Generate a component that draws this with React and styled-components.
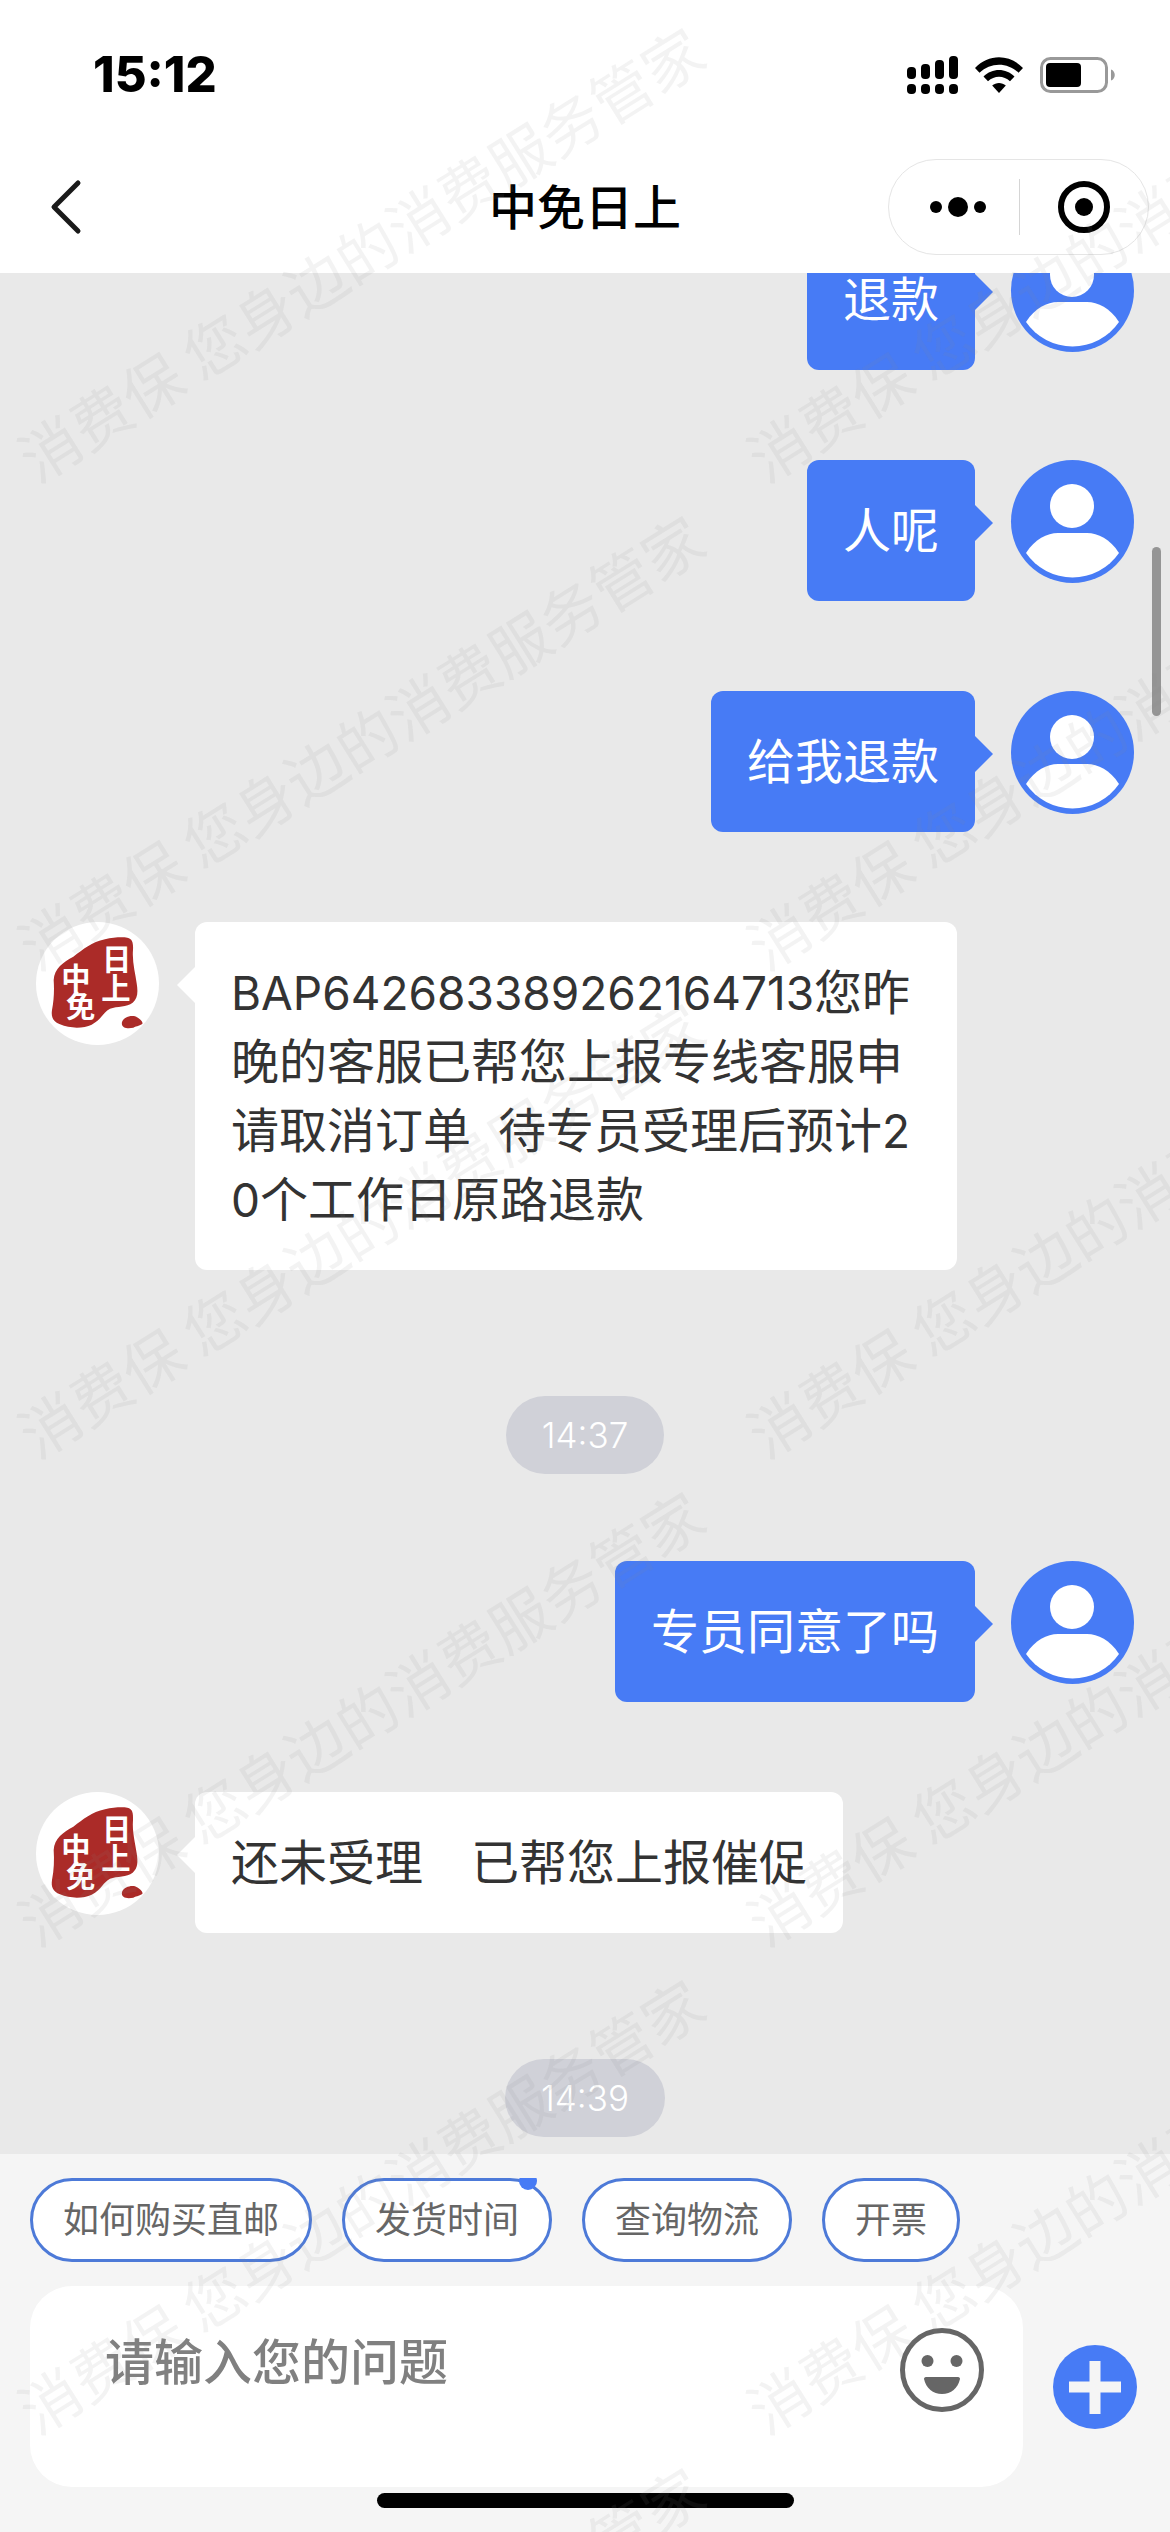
import React from 'react';
import styled, { createGlobalStyle } from 'styled-components';

const GlobalStyle = createGlobalStyle`
  * {
    box-sizing: border-box;
  }

  body {
    margin: 0;
    font-family: Inter, 'Noto Sans CJK SC', sans-serif;
  }

  button {
    margin: 0;
    padding: 0;
    border: none;
    background: none;
    font-family: inherit;
    cursor: pointer;
  }

  svg {
    display: block;
  }
`;

const PageStyle = styled.div`
  height: 100vh;
  background-color: #e9e9e9;
  overflow: hidden;

  display: flex;
  flex-direction: column;

  position: relative;
`;

const HeaderStyle = styled.header`
  background-color: #fff;
  flex: none;
`;

const StatusBar = styled.div`
  height: 141px;
  padding: 8px 55px 0 93px;

  display: flex;
  justify-content: space-between;
  align-items: center;

  time {
    font-size: 49px;
    font-weight: 800;
    color: #000;
  }
`;

const StatusIcons = styled.div`
  display: flex;
  align-items: center;
  gap: 17px;
`;

const NavBar = styled.nav`
  height: 132px;
  padding: 0 21px;

  display: grid;
  grid-template-columns: 1fr auto 1fr;
  align-items: center;

  h1 {
    margin: 0;
    font-size: 48px;
    font-weight: 500;
    line-height: 69px;
    color: #000;
  }
`;

const BackButton = styled.button`
  width: 60px;
  height: 60px;
  margin-left: 15px;
`;

const Capsule = styled.div`
  width: 261px;
  height: 96px;
  border: 1px solid #e5e5e5;
  border-radius: 48px;
  justify-self: end;

  display: flex;
  align-items: center;
`;

const CapsuleButton = styled.button`
  width: 50%;
  height: 56px;

  display: flex;
  justify-content: center;
  align-items: center;

  &:first-child {
    padding-left: 8px;
  }

  & + & {
    border-left: 1px solid #d5d5d5;
  }
`;

const ChatStyle = styled.main`
  flex: 1;
  min-height: 0;
  padding: 0 36px 17px;
  overflow: hidden;

  display: flex;
  flex-direction: column;
  justify-content: flex-end;

  position: relative;
`;

const ScrollThumb = styled.div`
  width: 9px;
  height: 169px;
  border-radius: 5px;
  background-color: #959595;

  position: absolute;
  top: 274px;
  right: 9px;
`;

const MessageRow = styled.div`
  flex: none;
  margin-bottom: 90px;

  display: flex;
  flex-direction: ${({ $mine }) => ($mine ? 'row-reverse' : 'row')};
  align-items: flex-start;
  gap: 36px;
`;

const Avatar = styled.div`
  width: 123px;
  height: 123px;
  border-radius: 50%;
  background-color: ${({ $mine }) => ($mine ? '#477bf5' : '#fff')};
  overflow: hidden;
  flex: none;
`;

const Bubble = styled.p`
  max-width: calc(100% - 336px);
  margin: 0;
  padding: 36px;
  border-radius: 12px;
  background-color: ${({ $mine }) => ($mine ? '#477bf5' : '#fff')};
  color: ${({ $mine }) => ($mine ? '#fff' : '#333')};
  font-size: 48px;
  line-height: 69px;
  white-space: pre-wrap;
  word-break: break-all;

  position: relative;

  &::after {
    content: "";
    border: 18px solid transparent;
    ${({ $mine }) => ($mine ? 'border-left-color: #477bf5; border-right: 0;' : 'border-right-color: #fff; border-left: 0;')}

    position: absolute;
    top: 45px;
    ${({ $mine }) => ($mine ? 'right: -18px;' : 'left: -18px;')}
  }
`;

const Latin = styled.span`
  font-size: 46px;
  line-height: 1;
`;

const TimeStamp = styled.time`
  flex: none;
  align-self: center;
  height: 78px;
  margin: 36px 0 87px;
  padding: 0 36px;
  border-radius: 39px;
  background-color: #d0d1d8;
  color: #fff;
  font-size: 35px;
  font-weight: 300;
  line-height: 78px;

  &:last-child {
    margin-bottom: 0;
  }
`;

const FooterStyle = styled.footer`
  flex: none;
  padding: 24px 30px;
  background-color: #f5f5f5;
`;

const QuickList = styled.div`
  display: flex;
  gap: 30px;
  overflow: hidden;
`;

const QuickButton = styled.button`
  height: 84px;
  padding: 0 30px;
  border: 3px solid #4d7ad8;
  border-radius: 42px;
  background-color: #fff;
  color: #666;
  font-size: 36px;
  line-height: 76px;
  white-space: nowrap;
  flex: none;

  position: relative;
`;

const Badge = styled.span`
  width: 18px;
  height: 18px;
  border-radius: 50%;
  background-color: #477bf5;

  position: absolute;
  top: -9px;
  right: 12px;
`;

const Composer = styled.div`
  margin-top: 24px;
  padding-right: 3px;

  display: flex;
  align-items: center;
  gap: 30px;
`;

const InputBox = styled.div`
  flex: 1;
  min-width: 0;
  height: 201px;
  padding: 42px 39px 0 75px;
  border-radius: 42px;
  background-color: #fff;

  display: flex;
  align-items: flex-start;
`;

const TextInput = styled.textarea`
  flex: 1;
  min-width: 0;
  height: 138px;
  padding: 0;
  border: none;
  outline: none;
  resize: none;
  background: none;
  color: #333;
  font-family: inherit;
  font-size: 49px;
  font-weight: 500;
  line-height: 69px;

  &::placeholder {
    color: #808080;
    opacity: 1;
  }
`;

const RoundButton = styled.button`
  width: 84px;
  height: 84px;
  border-radius: 50%;
  flex: none;
`;

const HomeBar = styled.div`
  width: 417px;
  max-width: 100%;
  height: 15px;
  margin: 6px auto 0;
  border-radius: 8px;
  background-color: #000;
`;

const WatermarkLayer = styled.div`
  overflow: hidden;
  pointer-events: none;

  display: grid;
  grid-template-columns: repeat(2, 729px);
  grid-auto-rows: 488px;
  place-items: center;

  position: absolute;
  top: 8px;
  right: 0;
  bottom: 0;
  left: -5px;
`;

const Watermark = styled.span`
  color: rgba(140, 140, 140, 0.1);
  font-family: 'Noto Sans CJK SC', sans-serif;
  font-size: 60px;
  line-height: 60px;
  white-space: nowrap;
  transform: rotate(-32deg);
`;

const messages = [
  { mine: true, text: '退款' },
  { mine: true, text: '人呢' },
  { mine: true, text: '给我退款' },
  { text: 'BAP642683389262164713您昨晚的客服已帮您上报专线客服申请取消订单  待专员受理后预计20个工作日原路退款' },
  { time: '14:37' },
  { mine: true, text: '专员同意了吗' },
  { text: '还未受理　已帮您上报催促' },
  { time: '14:39' },
];

const quickReplies = [
  { label: '如何购买直邮' },
  { label: '发货时间', badge: true },
  { label: '查询物流' },
  { label: '开票' },
];

function SignalIcon() {
  return (
    <svg width="51" height="38" viewBox="0 0 51 38">
      <rect x="0" y="11" width="9" height="12" rx="4" />
      <rect x="14" y="8" width="9" height="15" rx="4" />
      <rect x="28" y="4" width="9" height="19" rx="4" />
      <rect x="42" y="0" width="9" height="23" rx="4" />
      <rect x="0" y="28" width="9" height="10" rx="4" />
      <rect x="14" y="28" width="9" height="10" rx="4" />
      <rect x="28" y="28" width="9" height="10" rx="4" />
      <rect x="42" y="28" width="9" height="10" rx="4" />
    </svg>
  );
}

function WifiIcon() {
  return (
    <svg width="48" height="36" viewBox="0 0 48 36">
      <path d="M0 11C13.5-3.5 34.5-3.5 48 11L43.5 15.7C32.500 5 15.500 5 4.500 15.700Z" />
      <path d="M8.500 19.500C17 10.700 31 10.700 39.500 19.500L35 24.300C28.800 18.200 19.200 18.200 13 24.300Z" />
      <path d="M17.200 28.500C21 25 27 25 30.800 28.500L24 36Z" />
    </svg>
  );
}

function BatteryIcon() {
  return (
    <svg width="75" height="36" viewBox="0 0 75 36">
      <rect x="1.500" y="1.500" width="65" height="33" rx="9" fill="none" stroke="#999" strokeWidth="3" />
      <rect x="6" y="6" width="35" height="24" rx="4" />
      <path d="M71 12.500C76 14 76 22 71 23.500Z" fill="#999" />
    </svg>
  );
}

function UserFace() {
  return (
    <svg width="123" height="123" viewBox="0 0 123 123" fill="#fff">
      <circle cx="61" cy="46" r="22" />
      <path d="M15 93C24 79 36 73 47 73H76C87 73 99 79 108 93A56.500 56.500 0 0 1 15 93Z" />
    </svg>
  );
}

const SealText = styled.text`
  font-family: 'Noto Sans CJK SC', sans-serif;
  font-size: ${({ $size }) => $size}px;
  font-weight: 700;
  fill: #fff;
  text-anchor: middle;
`;

function ShopSeal() {
  return (
    <svg width="123" height="123" viewBox="48 66 369 369">
      <path
        fill="#ab2b28"
        d="M101 240C103 205 130 186 160 170C190 148 215 126 255 118C280 112 305 111 322 113C338 116 340 130 339 150C336 185 346 220 350 250C354 275 354 295 338 308C320 322 292 318 270 326C250 336 245 358 215 374C190 386 150 386 120 373C98 364 93 350 96 330C102 300 103 270 101 240Z"
      />
      <path fill="#ab2b28" d="M306 366C312 352 330 346 345 349C358 354 366 362 368 370C362 378 350 378 340 383C325 386 302 386 306 366Z" />
      <SealText x="290" y="209" $size={88}>日</SealText>
      <SealText x="288" y="298" $size={88}>上</SealText>
      <SealText x="168" y="266" $size={88}>中</SealText>
      <SealText x="182" y="352" $size={88}>免</SealText>
    </svg>
  );
}

function MessageText({ text }) {
  return text.split(/([A-Z0-9]+)/).map((part, i) => (
    i % 2 ? <Latin key={i}>{part}</Latin> : part
  ));
}

function Message({ mine, text }) {
  return (
    <MessageRow $mine={mine}>
      <Avatar $mine={mine}>{mine ? <UserFace /> : <ShopSeal />}</Avatar>
      <Bubble $mine={mine}><MessageText text={text} /></Bubble>
    </MessageRow>
  );
}

function Header() {
  return (
    <HeaderStyle>
      <StatusBar>
        <time>15:12</time>
        <StatusIcons>
          <SignalIcon />
          <WifiIcon />
          <BatteryIcon />
        </StatusIcons>
      </StatusBar>

      <NavBar>
        <BackButton aria-label="返回">
          <svg width="60" height="60" viewBox="0 0 60 60" fill="none" stroke="#1a1a1a" strokeWidth="5" strokeLinecap="round" strokeLinejoin="round">
            <path d="M42 6L18 30L42 54" />
          </svg>
        </BackButton>
        <h1>中免日上</h1>
        <Capsule>
          <CapsuleButton aria-label="更多">
            <svg width="58" height="20" viewBox="0 0 58 20">
              <circle cx="7" cy="10" r="6" />
              <circle cx="29" cy="10" r="10" />
              <circle cx="51" cy="10" r="6" />
            </svg>
          </CapsuleButton>
          <CapsuleButton aria-label="关闭">
            <svg width="52" height="52" viewBox="0 0 52 52">
              <circle cx="26" cy="26" r="23" fill="none" stroke="#000" strokeWidth="6" />
              <circle cx="26" cy="26" r="9" />
            </svg>
          </CapsuleButton>
        </Capsule>
      </NavBar>
    </HeaderStyle>
  );
}

function Footer() {
  return (
    <FooterStyle>
      <QuickList>
        {quickReplies.map(({ label, badge }) => (
          <QuickButton key={label}>
            {label}
            {badge && <Badge />}
          </QuickButton>
        ))}
      </QuickList>

      <Composer>
        <InputBox>
          <TextInput aria-label="请输入您的问题" placeholder="请输入您的问题" />
          <RoundButton aria-label="表情">
            <svg width="84" height="84" viewBox="0 0 84 84" fill="#666">
              <circle cx="42" cy="42" r="39.500" fill="none" stroke="#666" strokeWidth="5" />
              <circle cx="27.500" cy="33" r="6" />
              <circle cx="56.500" cy="33" r="6" />
              <path d="M26 49H58C59.500 49 60 50 60 51C58 60 51 66 42 66C33 66 26 60 24 51C24 50 24.500 49 26 49Z" />
            </svg>
          </RoundButton>
        </InputBox>
        <RoundButton aria-label="添加">
          <svg width="84" height="84" viewBox="0 0 84 84">
            <circle cx="42" cy="42" r="42" fill="#477bf5" />
            <path d="M16 42H68M42 16V69" stroke="#f5f5f5" strokeWidth="11" />
          </svg>
        </RoundButton>
      </Composer>

      <HomeBar />
    </FooterStyle>
  );
}

function App() {
  return (
    <PageStyle>
      <GlobalStyle />
      <Header />

      <ChatStyle>
        <ScrollThumb />
        {messages.map((item, i) => (
          item.time
            ? <TimeStamp key={i}>{item.time}</TimeStamp>
            : <Message key={i} mine={item.mine} text={item.text} />
        ))}
      </ChatStyle>

      <Footer />

      <WatermarkLayer aria-hidden="true">
        {Array.from({ length: 12 }, (_, i) => (
          <Watermark key={i}>消费保 您身边的消费服务管家</Watermark>
        ))}
      </WatermarkLayer>
    </PageStyle>
  );
}

export default App;
